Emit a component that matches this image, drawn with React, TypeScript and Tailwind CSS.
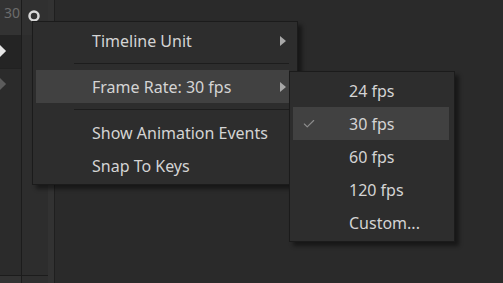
import { Check } from 'lucide-react'

const font = { fontFamily: '"Noto Sans", "Open Sans", sans-serif' }

function Arrow() {
  return (
    <svg width="6" height="10" viewBox="0 0 6 10" className="absolute right-[3px]">
      <path d="M0 0 L6 5 L0 10 Z" fill="#a8a8a8" />
    </svg>
  )
}

function MenuRow({ label, arrow, active }: { label: string; arrow?: boolean; active?: boolean }) {
  return (
    <div
      className={`relative flex h-[33px] items-center pl-[56px] mr-[8px] ${active ? 'bg-[#414141]' : ''}`}
    >
      <span className="text-[16px] text-[#d4d4d4]">{label}</span>
      {arrow && <Arrow />}
    </div>
  )
}

function Separator() {
  return (
    <div className="flex h-[13px] items-center pl-[38px] mr-[8px]">
      <div className="h-px w-full bg-[#1d1d1d]" />
    </div>
  )
}

function SubRow({ label, checked }: { label: string; checked?: boolean }) {
  return (
    <div
      className={`relative flex h-[33px] items-center pl-[56px] ml-[3px] mr-[5px] ${checked ? 'bg-[#414141]' : ''}`}
    >
      {checked && (
        <Check size={14} strokeWidth={2} className="absolute left-[9px] text-[#8c8c8c]" />
      )}
      <span className="text-[16px] text-[#d4d4d4]">{label}</span>
    </div>
  )
}

export default function App() {
  return (
    <div className="relative flex h-[283px] w-[503px] overflow-hidden bg-[#2a2a2a]" style={font}>
      {/* Left track column */}
      <div className="flex w-[21px] flex-col">
        <div className="flex h-[35px] items-start bg-[#333333] pl-[4px] pt-[4px]">
          <span className="text-[14px] leading-none pt-[2px] text-[#6c6c6c]">30</span>
        </div>
        <div className="relative h-[33px] bg-[#242424]">
          <div className="absolute left-[-6px] top-[11px] h-[10px] w-[10px] rotate-45 bg-[#e6e6e6]" />
        </div>
        <div className="h-px bg-[#212121]" />
        <div className="relative h-[32px] bg-[#2b2b2b]">
          <div className="absolute left-[-6px] top-[10px] h-[10px] w-[10px] rotate-45 bg-[#5c5c5c]" />
        </div>
        <div className="flex-1 bg-[#2b2b2b]" />
        <div className="h-px bg-[#1c1c1c]" />
        <div className="h-[7px] bg-[#333333]" />
      </div>
      <div className="w-px bg-[#1c1c1c]" />

      {/* Second column */}
      <div className="flex w-[26px] flex-col bg-[#2d2d2d]">
        <div className="h-[35px] bg-[#303030] pl-[5px] pt-[9px]">
          <svg width="14" height="14" viewBox="0 0 14 14">
            <circle cx="7" cy="7" r="4.5" fill="none" stroke="#d8d8d8" strokeWidth="2.5" />
          </svg>
        </div>
        <div className="flex-1" />
        <div className="h-px bg-[#1c1c1c]" />
        <div className="h-[7px] bg-[#2f2f2f]" />
      </div>
      <div className="w-[6px] bg-[#323232]" />
      <div className="w-px bg-[#1f1f1f]" />

      {/* Main area */}
      <div className="flex-1 bg-[#2a2a2a]" />

      {/* Context menu */}
      <div className="absolute left-[32px] top-[21px] flex w-[266px] flex-col border border-[#1b1b1b] bg-[#2d2d2d] py-[2px] pl-[3px] shadow-[4px_4px_4px_rgba(0,0,0,0.45)]">
        <MenuRow label="Timeline Unit" arrow />
        <Separator />
        <MenuRow label="Frame Rate: 30 fps" arrow active />
        <Separator />
        <MenuRow label="Show Animation Events" />
        <MenuRow label="Snap To Keys" />
      </div>

      {/* Submenu */}
      <div className="absolute left-[289px] top-[71px] flex w-[166px] flex-col border border-[#1b1b1b] bg-[#2d2d2d] py-[2px] shadow-[4px_4px_4px_rgba(0,0,0,0.45)]">
        <SubRow label="24 fps" />
        <SubRow label="30 fps" checked />
        <SubRow label="60 fps" />
        <SubRow label="120 fps" />
        <SubRow label="Custom..." />
      </div>
    </div>
  )
}
